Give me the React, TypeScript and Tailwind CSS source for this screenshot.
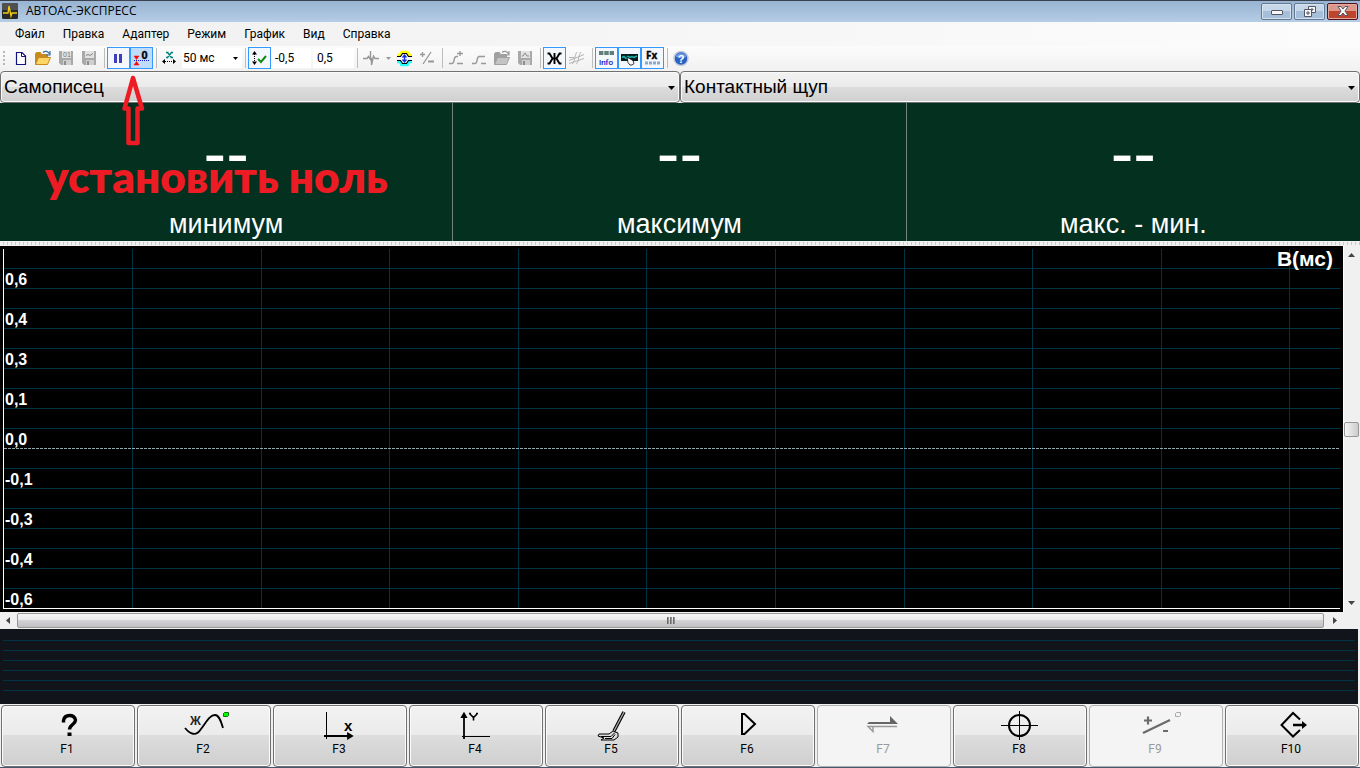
import type { ReactNode } from 'react';

const menuItems = ['Файл', 'Правка', 'Адаптер', 'Режим', 'График', 'Вид', 'Справка'];

const readings = [
  { value: '--', label: 'минимум' },
  { value: '--', label: 'максимум' },
  { value: '--', label: 'макс. - мин.' },
];

const yLabels = ['0,6', '0,4', '0,3', '0,1', '0,0', '-0,1', '-0,3', '-0,4', '-0,6'];

const GRID_COLOR = '#003344';

interface ToolProps {
  label: string;
  active?: boolean;
  pressed?: boolean;
  children: ReactNode;
}

function Tool({ label, active, pressed, children }: ToolProps) {
  const look = pressed
    ? 'border-[#3399ff] bg-[#bfddfb]'
    : active
      ? 'border-[#3399ff] bg-[#f4f8fd]'
      : 'border-transparent';
  return (
    <button type="button" aria-label={label} className={`h-[22px] w-[23px] shrink-0 border ${look}`}>
      <svg viewBox="1 1 21 20" className="block h-5 w-[21px]" fill="none">
        {children}
      </svg>
    </button>
  );
}

function Separator() {
  return (
    <div className="flex h-5 w-1.5 shrink-0 justify-center">
      <div className="w-px bg-[#bdbdbd]" />
    </div>
  );
}

function Floppy({ children }: { children: ReactNode }) {
  return (
    <>
      <path d="M4 4h14v14H6l-2-2z" fill="#a9a9a9" />
      <path d="M7 4h9v7H7z" fill="#e2e2e2" />
      <path d="M8 13h8v5H8z" fill="#cfcfcf" />
      <path d="M9 14h2v4H9z" fill="#8f8f8f" />
      {children}
    </>
  );
}

function Folder({ body, back, arrow }: { body: string; back: string; arrow: string }) {
  return (
    <>
      <path d="M3.500 17.500v-11l1-1h4l1 2h6v3" fill={back} stroke={back} />
      <path d="M3.500 17.500l3-7h12l-3 7z" fill={body} stroke={back} />
      <path d="M11 5.500c2-2 5-1.500 6.500 1.500M18 4v4h-4" stroke={arrow} strokeWidth="1.200" />
    </>
  );
}

function Toolbar() {
  return (
    <div className="flex h-[25px] items-center bg-gradient-to-b from-[#fcfcfc] to-[#f1f1f1] pb-px font-[Roboto,sans-serif] text-xs text-black">
      <div className="flex w-[9px] shrink-0 flex-col gap-0.5 pl-[3px]">
        <div className="size-0.5 bg-[#b8b8b8]" />
        <div className="size-0.5 bg-[#b8b8b8]" />
        <div className="size-0.5 bg-[#b8b8b8]" />
        <div className="size-0.5 bg-[#b8b8b8]" />
      </div>
      <Tool label="Новый">
        <path d="M7.500 5.500h5.500l3.500 3.500v8.500h-9z" fill="#fff" stroke="#13137c" strokeWidth="1.200" />
        <path d="M12.500 5.500v4h4" stroke="#13137c" />
      </Tool>
      <Tool label="Открыть">
        <Folder body="#fdd667" back="#c98a1c" arrow="#3b6ea5" />
      </Tool>
      <Tool label="Сохранить данные">
        <Floppy>
          <text x="8" y="10" fontSize="7" fill="#777" fontFamily="Liberation Sans">01</text>
        </Floppy>
      </Tool>
      <Tool label="Сохранить график">
        <Floppy>
          <path d="M8 8.500l2-1 2 1 3-2" stroke="#888" />
        </Floppy>
      </Tool>
      <Separator />
      <Tool label="Пауза" active>
        <path d="M7 7h3v9H7zM12 7h3v9h-3z" fill="#3d3dc4" />
      </Tool>
      <Tool label="Установить ноль" pressed>
        <path d="M4 9h5l-2.500 3.500zM4 18h5l-2.500-3.500z" fill="#f00" stroke="#f00" strokeWidth=".5" />
        <path d="M4 13.500h16" stroke="#1010d0" strokeDasharray="1 1" />
        <text x="11.500" y="12" fontSize="11" fontWeight="bold" fill="#000" stroke="#000" strokeWidth=".4" fontFamily="Liberation Sans">0</text>
      </Tool>
      <Separator />
      <Tool label="Развёртка">
        <path d="M7 5.500h2.500M12 5.500h2M7 10.500h2M11.500 10.500h2.500M8.500 5.500l4 5M12.500 5.500l-4 5" stroke="#00807c" strokeWidth="1.400" />
        <path d="M6 14.500h9" stroke="#000" strokeDasharray="1 1" />
        <path d="M6 12v5l-3-2.500zM14 12v5l3-2.500z" fill="#000" />
      </Tool>
      <div className="relative w-[60px] shrink-0">
        <select aria-label="Время развёртки" className="h-5 w-full appearance-none bg-white pl-px outline-none">
          <option>50 мс</option>
        </select>
        <svg viewBox="0 0 5 3" className="pointer-events-none absolute top-[9px] right-1 h-[3px] w-[5px]">
          <path d="M0 0h5L2.500 3z" />
        </svg>
      </div>
      <Separator />
      <Tool label="Автомасштаб" active>
        <path d="M6.500 7v8" stroke="#000" strokeDasharray="1 1" />
        <path d="M4 7.500h5l-2.500-3.500zM4 14.500h5l-2.500 3.500z" fill="#000" />
        <path d="M10 12l3 3 5-6" stroke="#128a12" strokeWidth="2" />
      </Tool>
      <div className="flex shrink-0 gap-0.5">
        <input aria-label="Нижний предел" defaultValue="-0,5" className="h-5 w-10 bg-white pl-1 outline-none" />
        <input aria-label="Верхний предел" defaultValue="0,5" className="h-5 w-[41px] bg-white pl-1 outline-none" />
      </div>
      <Separator />
      <Tool label="Синхронизация">
        <path d="M3 11.500h4l1.500-2 2 3V4M11.500 11v7l2-9 1.500 2.500h4" stroke="#969696" strokeWidth="1.400" />
      </Tool>
      <button type="button" aria-label="Вид синхронизации" className="flex w-2.5 shrink-0 justify-center">
        <svg viewBox="0 0 5 3" className="h-[3px] w-[5px]" fill="#999">
          <path d="M0 0h5L2.500 3z" />
        </svg>
      </button>
      <Tool label="Растянуть">
        <path d="M4 8h3l1.500-3h6L16 8h3" stroke="#ff0" strokeWidth="2.500" />
        <path d="M4 9.500h3.500l2-3h4l2 3H19" stroke="#000" strokeWidth="1.200" />
        <path d="M4 15h3l1.500 3h6l1.500-3h3" stroke="#2ff" strokeWidth="2.500" />
        <path d="M4 13.500h3.500l2 3h4l2-3H19" stroke="#000" strokeWidth="1.200" />
        <path d="M11.500 8.500v6M9.500 10.500l2-2.500 2 2.500M9.500 12.500l2 2.500 2-2.500" stroke="#1230e8" strokeWidth="1.300" />
      </Tool>
      <Tool label="Инверсия">
        <path d="M4 7.500h5M6.500 5v5M7 17l8-12" stroke="#969696" strokeWidth="1.300" />
        <path d="M12 13.500h6v2h-6z" fill="#969696" />
      </Tool>
      <Separator />
      <Tool label="Добавить график">
        <path d="M4 16.500h3c3 0 1-6 4-7M12 6.500h6M15 4v5M12 16.500h6M11 9.500h2" stroke="#999" strokeWidth="1.400" />
      </Tool>
      <Tool label="Убрать график">
        <path d="M4 16.500h3c3 0 1-6 4-7h2M13 9.500h4M13 16.500h5" stroke="#999" strokeWidth="1.400" />
      </Tool>
      <Tool label="Открыть график">
        <Folder body="#c4c4c4" back="#a0a0a0" arrow="#979797" />
      </Tool>
      <Tool label="Записать график">
        <Floppy>
          <path d="M8 9h1l2-3 2 3h2" stroke="#888" />
        </Floppy>
      </Tool>
      <Separator />
      <Tool label="Жирные линии" active>
        <path d="M4.500 6.500h2l3 5-3 5h-2M18.500 6.500h-2l-3 5 3 5h2M11.500 6v11M9 11.500h5" stroke="#000" strokeWidth="1.900" />
      </Tool>
      <Tool label="Наложение">
        <path d="M3 13.500l5-2 3-1 7-3M3 16.500l6-2 9-3M6 17c3-1 2-8 5-12M10 17c3-1 2-8 5-12M3 10.500h5" stroke="#b4b4b4" />
      </Tool>
      <Separator />
      <Tool label="Информация" active>
        <path d="M4 4h15v4H4z" fill="#b8c8c8" />
        <path d="M4 4h4v4H4zM9.500 4h4v4h-4zM15 4h4v4h-4z" fill="#5f7f78" />
        <text x="4" y="18" fontSize="8" fill="#1515c8" stroke="#1515c8" strokeWidth=".2" fontFamily="Roboto">Info</text>
      </Tool>
      <Tool label="Обзор" active>
        <path d="M3 7h17v7H3z" fill="#071c1c" />
        <path d="M4 10.500l2-1 2 2 2-2 2 1 2-1 2 1 3-1.500" stroke="#16b8b0" strokeWidth="1.500" />
        <path d="M9 10l6 3.500 1 3-2 1.500h-2l-2-2.500z" fill="#fff" stroke="#000" strokeWidth=".8" />
      </Tool>
      <Tool label="Функциональные клавиши" active>
        <text x="5" y="12" fontSize="10" fontWeight="bold" fill="#000" stroke="#000" strokeWidth=".3" fontFamily="Open Sans">Fx</text>
        <path d="M4 16h15" stroke="#8aa9c9" strokeWidth="3" strokeDasharray="3 1" />
      </Tool>
      <Separator />
      <Tool label="Справка">
        <circle cx="11" cy="11.500" r="7" fill="#2a62c4" stroke="#c3cbd8" strokeWidth="1.500" />
        <path d="M5.500 9.500a6 5.500 0 0 1 11 0q-5 3-11 0z" fill="#6f9ae4" />
        <text x="7.700" y="15.500" fontSize="11" fontWeight="bold" fill="#fff" fontFamily="Liberation Sans">?</text>
      </Tool>
    </div>
  );
}

function TitleBar() {
  return (
    <header className="flex h-[22px] items-center border-t border-[#39424e] bg-gradient-to-b from-[#98b4d2] to-[#b5cde6] pr-0.5 pb-px pl-0.5">
      <svg viewBox="0 0 16 16" className="size-4">
        <rect width="16" height="16" rx="1.500" fill="#292929" />
        <path d="M0 1.500Q0 0 1.500 0h13Q16 0 16 1.500V7H0z" fill="#505050" />
        <path d="M1 10h5l1-7 2 10 1-3h5" fill="none" stroke="#f2cd12" strokeWidth="1.300" />
      </svg>
      <h1 className="ml-2 font-['Open_Sans',sans-serif] text-xs text-black">АВТОАС-ЭКСПРЕСС</h1>
      <div className="ml-auto flex gap-0.5">
        <button type="button" aria-label="Свернуть" className="flex h-[17px] w-[31px] items-center justify-center rounded-xs border border-[#64788f] bg-[linear-gradient(#c6d7e9_50%,#a5bfda_50%)] shadow-[inset_0_0_0_1px_#d4e1ef]">
          <svg viewBox="0 0 12 6" className="mt-1 h-1.5 w-3">
            <rect x=".5" y=".5" width="11" height="4" rx=".5" fill="#f7f7f7" stroke="#535666" />
          </svg>
        </button>
        <button type="button" aria-label="Восстановить" className="flex h-[17px] w-[31px] items-center justify-center rounded-xs border border-[#64788f] bg-[linear-gradient(#c6d7e9_50%,#a5bfda_50%)] shadow-[inset_0_0_0_1px_#d4e1ef]">
          <svg viewBox="0 0 12 11" className="h-[11px] w-3" fill="#f7f7f7" stroke="#535666">
            <path d="M4.500.5h7v6h-7zM7 3h2v1H7z" />
            <path d="M.5 3.500h7v7h-7zM3 6h2v2H3z" />
          </svg>
        </button>
        <button type="button" aria-label="Закрыть" className="flex h-[17px] w-[31px] items-center justify-center rounded-xs border border-[#4f1420] bg-[linear-gradient(#dc988a_50%,#bd452d_50%)] shadow-[inset_0_0_0_1px_#e3a99c]">
          <svg viewBox="0 0 12 10" className="h-2.5 w-3">
            <path d="M1 .5h3l2 2.500 2-2.500h3L8 5l3 4.500H8L6 7 4 9.500H1L4 5z" fill="#f7f7f7" stroke="#535666" />
          </svg>
        </button>
      </div>
    </header>
  );
}

function Combo({ label, value }: { label: string; value: string }) {
  return (
    <div className="relative flex-1">
      <select
        aria-label={label}
        className="h-8 w-full appearance-none rounded-sm border border-[#707070] bg-[linear-gradient(#f2f2f2,#ebebeb_50%,#dddddd_50%,#cfcfcf)] pt-px pl-[3px] font-['Liberation_Sans',sans-serif] text-[19px] text-black shadow-[inset_0_0_0_1px_#fbfbfb] outline-none"
      >
        <option>{value}</option>
      </select>
      <svg viewBox="0 0 7 4" className="pointer-events-none absolute top-[15px] right-[5px] h-1 w-[7px]">
        <path d="M0 0h7L3.500 4z" />
      </svg>
    </div>
  );
}

function Chart() {
  const rows = Array.from({ length: 17 }, (_, i) => 19 + i * 20);
  const cols = Array.from({ length: 10 }, (_, i) => (i + 1) * 9.625);

  return (
    <div className="min-w-0 flex-1 bg-black p-[3px] font-['Liberation_Sans',sans-serif] font-bold text-white">
      <div className="relative h-full border-b border-l border-white">
        <svg className="absolute inset-0 h-full w-full" shapeRendering="crispEdges">
          {cols.map((x) => (
            <line key={x} x1={`${x}%`} x2={`${x}%`} y1="0" y2="100%" stroke={GRID_COLOR} />
          ))}
          {rows.map((y) => (
            <line
              key={y}
              x1="0"
              x2="100%"
              y1={y + 0.5}
              y2={y + 0.5}
              stroke={y === 199 ? '#8fa9ad' : GRID_COLOR}
              strokeDasharray={y === 199 ? '3 1' : undefined}
            />
          ))}
        </svg>
        <div className="relative flex justify-between pl-px">
          <ul className="pt-[21px] text-base leading-5">
            {yLabels.map((label) => (
              <li key={label} className="h-10 last:h-4">
                {label}
              </li>
            ))}
          </ul>
          <span className="pr-[7px] text-[21px] leading-5">В(мс)</span>
        </div>
      </div>
    </div>
  );
}

function VerticalScroll() {
  return (
    <div className="flex w-[17px] shrink-0 flex-col items-center justify-between border-l border-white bg-[#f0f0f0] py-[7px] pr-px">
      <svg viewBox="0 0 7 4" className="h-1 w-[7px]" fill="#444">
        <path d="M0 4h7L3.500 0z" />
      </svg>
      <div className="h-[15px] w-[15px] rounded-xs border border-[#979797] bg-gradient-to-r from-[#f5f5f5] to-[#cccccc]" />
      <svg viewBox="0 0 7 4" className="h-1 w-[7px]" fill="#444">
        <path d="M0 0h7L3.500 4z" />
      </svg>
    </div>
  );
}

function HorizontalScroll() {
  return (
    <div className="flex h-[17px] items-center bg-[#f0f0f0] pr-[17px]">
      <svg viewBox="0 0 17 7" className="h-[7px] w-[17px] shrink-0" fill="#444">
        <path d="M10 0v7L6 3.500z" />
      </svg>
      <div className="flex h-[15px] flex-1 items-center justify-center gap-px rounded-xs border border-[#979797] bg-[linear-gradient(#f5f5f5,#e9e9ea_45%,#d5d5d7_45%,#c0c0c4)]">
        <i className="h-[7px] w-0.5 bg-gradient-to-r from-[#555] to-[#aaa]" />
        <i className="h-[7px] w-0.5 bg-gradient-to-r from-[#555] to-[#aaa]" />
        <i className="h-[7px] w-0.5 bg-gradient-to-r from-[#555] to-[#aaa]" />
      </div>
      <svg viewBox="0 0 19 7" className="h-[7px] w-[19px] shrink-0" fill="#444">
        <path d="M9 0v7l4-3.500z" />
      </svg>
    </div>
  );
}

interface FunctionKey {
  name: string;
  disabled?: boolean;
  icon: ReactNode;
}

// Icons share a 60x30 box centred over the key name.
const functionKeys: FunctionKey[] = [
  {
    name: 'F1',
    icon: (
      <>
        <path d="M26.500 11.500v-2q1-5 6-5t6 4.500c0 4.500-6 4.500-6 9.500" stroke="#000" strokeWidth="3.400" />
        <path d="M30.500 21.500h4V25h-4z" fill="#000" />
      </>
    ),
  },
  {
    name: 'F2',
    icon: (
      <>
        <text x="17" y="14" fontSize="12" fontWeight="bold" fill="#222" fontFamily="Liberation Sans">Ж</text>
        <path d="M12 17c5 6 11 9 16 1C34 10 37 4 42 4c4 0 6 6 8 13" stroke="#000" strokeWidth="1.800" />
        <path d="M50.500 2.500l1-1h4v3l-1 1h-4z" fill="#00ff00" stroke="#087508" />
      </>
    ),
  },
  {
    name: 'F3',
    icon: (
      <>
        <path d="M17.500 1v27" stroke="#000" />
        <path d="M15 25h26M39 22.500l4 2.500-4 2.500z" fill="#000" stroke="#000" strokeWidth="1.800" />
        <text x="35" y="20" fontSize="15" fontWeight="bold" fill="#000" fontFamily="Liberation Sans">x</text>
      </>
    ),
  },
  {
    name: 'F4',
    icon: (
      <>
        <path d="M19 6v22M17 6l2-3.500L21 6z" fill="#000" stroke="#000" strokeWidth="1.800" />
        <path d="M17 25.500h28" stroke="#000" />
        <path d="M25 3l3.500 3.500L32 3M28.500 6v3.500M24 2.500h2M31 2.500h2" stroke="#000" strokeWidth="1.600" />
      </>
    ),
  },
  {
    name: 'F5',
    icon: (
      <>
        <path d="M43 1L33 20" stroke="#000" strokeWidth="3.500" />
        <path d="M43 1L33 20" stroke="#aaa" strokeWidth="1.300" />
        <path d="M32 20l5 2v4l-4 3H20l3-2-6-2 1-2h10z" fill="#ddd" stroke="#000" />
        <path d="M20 25.500h10l4-4M24 27.500h7l3-4" stroke="#000" />
      </>
    ),
  },
  {
    name: 'F6',
    icon: <path d="M25 3h2.500L38 13 27.500 23H25z" stroke="#000" strokeWidth="2" />,
  },
  {
    name: 'F7',
    disabled: true,
    icon: (
      <>
        <path d="M14 13l2-2h21V5l8 8z" fill="#666" />
        <path d="M44 15.500H15l5 5v-5" stroke="#999" strokeWidth="1.400" />
      </>
    ),
  },
  {
    name: 'F8',
    icon: (
      <>
        <circle cx="30.500" cy="14.500" r="10.500" stroke="#000" strokeWidth="2" />
        <path d="M12 14.500h37M30.500 0v29" stroke="#000" />
      </>
    ),
  },
  {
    name: 'F9',
    disabled: true,
    icon: (
      <>
        <path d="M18 22L45 9M19 9.500h8M23 5.500v8M38 20h5" stroke="#6b6b6b" strokeWidth="2.200" />
        <path d="M50.500 2.500l1-1h4v3l-1 1h-4z" stroke="#aaa" />
      </>
    ),
  },
  {
    name: 'F10',
    icon: (
      <>
        <path d="M39 8.500l-7-6.500L20.500 14 32 25.500l7-6.500" stroke="#000" strokeWidth="2" />
        <path d="M32 14h9" stroke="#000" strokeWidth="2.500" />
        <path d="M41 10l5 4-5 4z" fill="#000" />
      </>
    ),
  },
];

function FunctionBar() {
  return (
    <nav className="grid grid-cols-10 gap-0.5 border-b border-[#46566b] bg-[#f0f0f0] px-px pt-px">
      {functionKeys.map(({ name, disabled, icon }) => (
        <button
          key={name}
          type="button"
          disabled={disabled}
          className={`flex h-[62px] flex-col items-center rounded-sm border pt-[5px] pr-0.5 font-[Roboto,sans-serif] text-xs ${
            disabled
              ? 'border-[#adb2b5] bg-[#f4f4f4] text-[#9a9a9a]'
              : 'border-[#707070] bg-[linear-gradient(#f2f2f2,#ebebeb_48%,#dddddd_48%,#cfcfcf)] text-black shadow-[inset_0_0_0_1px_#fbfbfb]'
          }`}
        >
          <svg viewBox="0 0 60 30" className="h-[30px] w-[60px]" fill="none">
            {icon}
          </svg>
          <span className="leading-4">{name}</span>
        </button>
      ))}
    </nav>
  );
}

export default function App() {
  return (
    <div className="relative flex min-h-screen flex-col overflow-hidden bg-[#f0f0f0]">
      <TitleBar />
      <nav className="flex h-6 items-center gap-[18px] bg-gradient-to-r from-[#f0f0f0] to-[#fcfcfc] pl-[15px] font-[Roboto,sans-serif] text-xs text-black">
        {menuItems.map((item) => (
          <button key={item} type="button">
            {item}
          </button>
        ))}
      </nav>
      <Toolbar />
      <div className="flex">
        <Combo label="Режим прибора" value="Самописец" />
        <Combo label="Датчик" value="Контактный щуп" />
      </div>

      <section className="grid grid-cols-3 divide-x divide-[#75837c] bg-[#03301f] font-['Liberation_Sans',sans-serif] text-white">
        {readings.map(({ value, label }) => (
          <div key={label} className="flex h-[138px] flex-col items-center justify-between pt-5 pb-px">
            <span className="text-[68px] leading-[60px]">{value}</span>
            <span className="text-[27px] leading-8">{label}</span>
          </div>
        ))}
      </section>
      <div className="h-[5px] bg-[repeating-linear-gradient(90deg,#f0f0f0_0_3px,#c8c8c8_3px_4px)] bg-[length:100%_3px] bg-center bg-no-repeat" />

      <main className="flex flex-1">
        <Chart />
        <VerticalScroll />
      </main>
      <HorizontalScroll />
      <div className="mr-0.5 flex flex-col gap-[9px] bg-[#11141a] px-[3px] pt-[11px] pb-[13px]">
        <div className="h-px bg-[#003344]" />
        <div className="h-px bg-[#003344]" />
        <div className="h-px bg-[#003344]" />
        <div className="h-px bg-[#003344]" />
        <div className="h-px bg-[#003344]" />
        <div className="h-px bg-[#003344]" />
      </div>
      <FunctionBar />

      <div className="pointer-events-none absolute top-[74px] left-[45px] text-[#ed1c24]">
        <svg viewBox="0 0 24 72" className="ml-[77px] h-[72px] w-6" fill="none">
          <path d="M11 4L2.500 34.500H6.500V69h9V34.500h4.500z" stroke="#ed1c24" strokeWidth="4.500" strokeLinejoin="round" />
        </svg>
        <p className="font-[Lato,'Open_Sans',sans-serif] text-[44px] leading-[60px] font-extrabold whitespace-nowrap">установить ноль</p>
      </div>
    </div>
  );
}
